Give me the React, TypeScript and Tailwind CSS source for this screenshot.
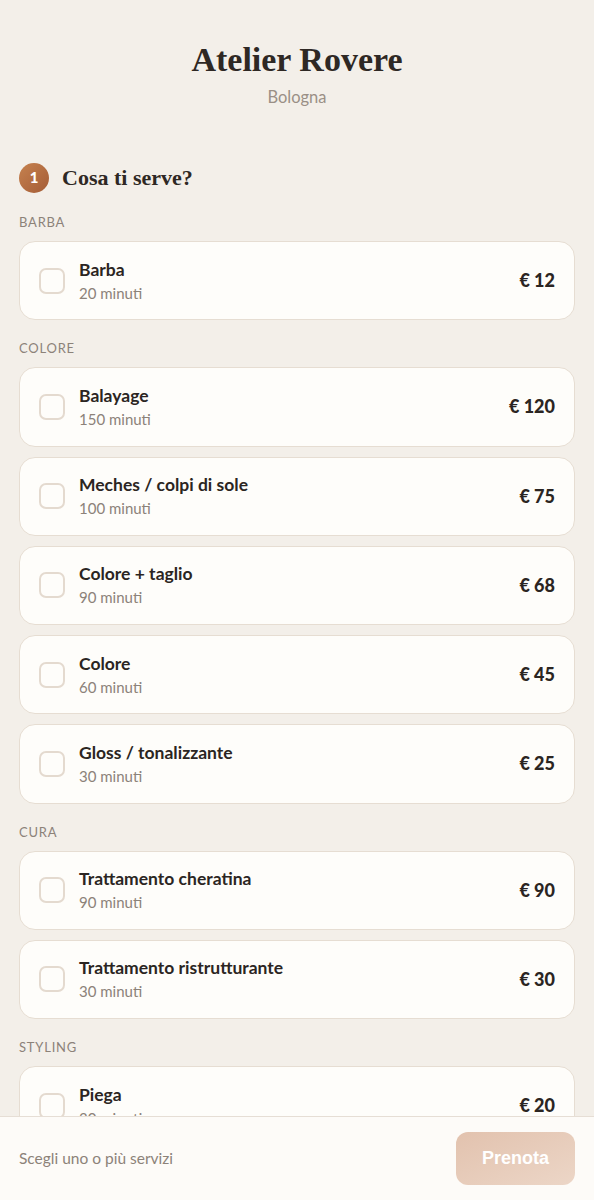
import React from "react";

type Item = { name: string; dur: string; price: string };
const groups: { label: string; items: Item[] }[] = [
  { label: "Barba", items: [{ name: "Barba", dur: "20 minuti", price: "€ 12" }] },
  {
    label: "Colore",
    items: [
      { name: "Balayage", dur: "150 minuti", price: "€ 120" },
      { name: "Meches / colpi di sole", dur: "100 minuti", price: "€ 75" },
      { name: "Colore + taglio", dur: "90 minuti", price: "€ 68" },
      { name: "Colore", dur: "60 minuti", price: "€ 45" },
      { name: "Gloss / tonalizzante", dur: "30 minuti", price: "€ 25" },
    ],
  },
  {
    label: "Cura",
    items: [
      { name: "Trattamento cheratina", dur: "90 minuti", price: "€ 90" },
      { name: "Trattamento ristrutturante", dur: "30 minuti", price: "€ 30" },
    ],
  },
  {
    label: "Styling",
    items: [
      { name: "Piega", dur: "30 minuti", price: "€ 20" },
      { name: "Taglio donna", dur: "45 minuti", price: "€ 35" },
    ],
  },
];

function Card({ it }: { it: Item }) {
  return (
    <div className="flex items-center h-[79.25px] rounded-[16px] border border-[#e6ddd2] bg-[#fefdfa] pl-[19px] pr-[19px]">
      <div className="w-[26px] h-[26px] rounded-[7px] border-2 border-[#e4dacf] shrink-0" />
      <div className="ml-[14px] flex flex-col flex-1">
        <div className="text-[17.5px] leading-[22px] font-bold text-[#2b2522]">{it.name}</div>
        <div className="text-[15px] leading-[20px] text-[#8c8279] mt-[2px]">{it.dur}</div>
      </div>
      <div className="text-[18px] font-black text-[#2b2522]">{it.price}</div>
    </div>
  );
}

export default function App() {
  return (
    <div className="min-h-[1200px] bg-[#f3efe9] pb-[120px]" style={{ fontFamily: "Lato, 'Noto Sans', sans-serif" }}>
      <div className="flex flex-col items-center pt-[38px]">
        <h1 className="text-[34px] leading-[44px] font-bold text-[#2e2824]" style={{ fontFamily: "'Liberation Serif', serif" }}>
          Atelier Rovere
        </h1>
        <div className="text-[16.5px] text-[#9a8f86] mt-[4px] leading-[22px]">Bologna</div>
      </div>
      <div className="px-[19px] mt-[53px]">
        <div className="flex items-center gap-[13px]">
          <div className="w-[30px] h-[30px] rounded-full bg-gradient-to-br from-[#c6824f] to-[#a45c36] flex items-center justify-center text-white text-[15px] font-black">
            1
          </div>
          <div className="text-[22px] font-bold text-[#2e2824]" style={{ fontFamily: "'Liberation Serif', serif" }}>
            Cosa ti serve?
          </div>
        </div>
        <div className="mt-[20px]">
          {groups.map((g, gi) => (
            <div key={g.label} className={gi === 0 ? "" : "mt-[20px]"}>
              <div className="text-[13px] leading-[16px] tracking-[0.06em] uppercase text-[#8c8279]">{g.label}</div>
              <div className="mt-[11px] flex flex-col gap-[10px]">
                {g.items.map((it) => (
                  <Card key={it.name} it={it} />
                ))}
              </div>
            </div>
          ))}
        </div>
      </div>
      <div className="fixed left-0 right-0 bottom-0 h-[84px] bg-[#fdfbf8] border-t border-[#e6ded5] flex items-center justify-between pl-[19px] pr-[19px]">
        <div className="text-[15.5px] text-[#8c8279]">Scegli uno o più servizi</div>
        <div
          className="w-[119px] h-[53px] rounded-[12px] bg-gradient-to-br from-[#e2c2ae] to-[#ecd6c7] flex items-center justify-center text-white text-[18px] font-bold"
          style={{ fontFamily: "'Liberation Sans', Arial, sans-serif" }}
        >
          Prenota
        </div>
      </div>
    </div>
  );
}
